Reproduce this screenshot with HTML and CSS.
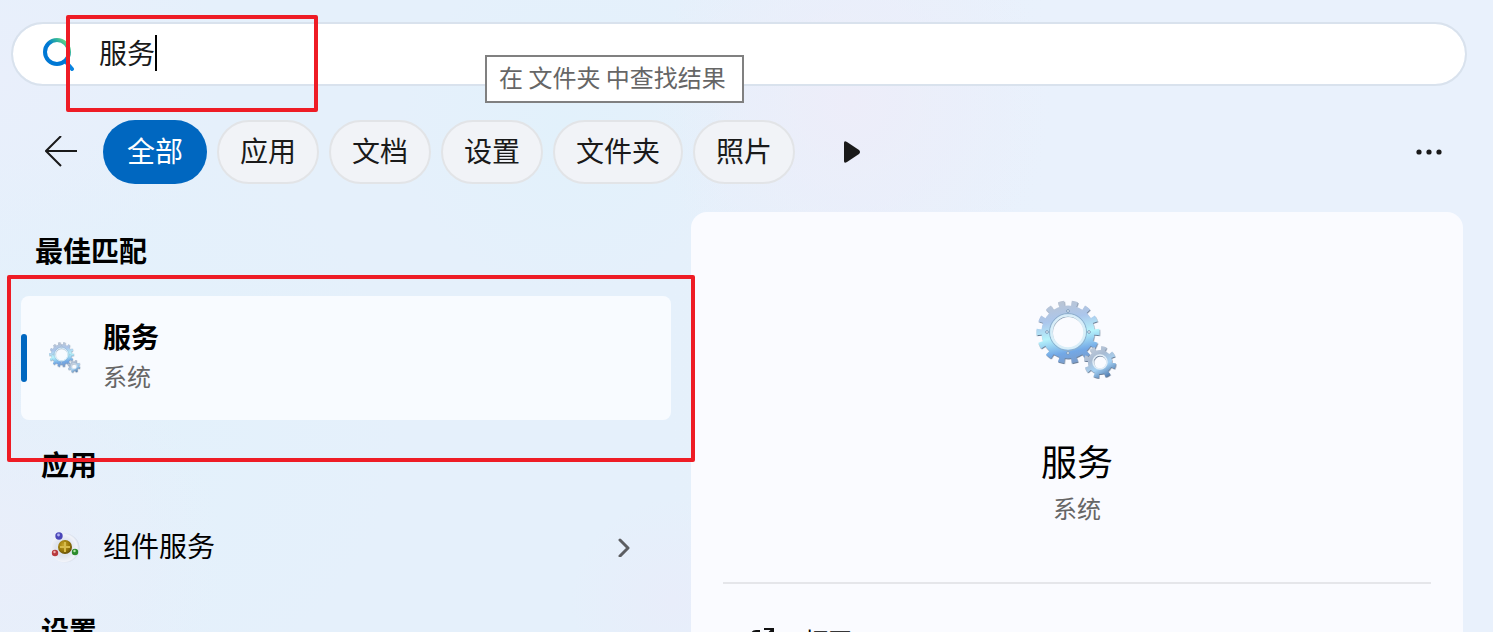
FILE: index.html
```
<!DOCTYPE html>
<html lang="zh-CN">
<head>
    <meta charset="UTF-8">
    <meta name="viewport" content="width=device-width, initial-scale=1.0">
    <title>搜索</title>
    <link rel="stylesheet" href="styles.css">
</head>
<body>
    <header>
        <div class="search-bar">
            <svg class="search-icon" width="34" height="34" viewBox="0 0 34 34" fill="none">
                <defs>
                    <linearGradient id="lens" x1="8" y1="26" x2="27" y2="6" gradientUnits="userSpaceOnUse">
                        <stop offset="0.5" stop-color="#0078d4"/>
                        <stop offset="0.75" stop-color="#24aaa5"/>
                        <stop offset="1" stop-color="#68d585"/>
                    </linearGradient>
                </defs>
                <path d="M25 25l6 7" stroke="#0a84e0" stroke-width="4" stroke-linecap="round"/>
                <circle cx="16" cy="15" r="12" stroke="url(#lens)" stroke-width="4"/>
            </svg>
            <input type="text" class="search-input" value="服务" aria-label="搜索">
            <span class="caret"></span>
            <span class="mark mark-search"></span>
            <div class="tooltip" role="tooltip">在 文件夹 中查找结果</div>
        </div>

        <nav class="filters">
            <button class="icon-btn back" aria-label="返回">
                <svg width="32" height="32" viewBox="0 0 32 32" fill="none" stroke="#1a1a1a" stroke-width="2">
                    <path d="M32 15H1M16 0L1 15l15 15"/>
                </svg>
            </button>
            <div class="chips">
                <button class="chip active">全部</button>
                <button class="chip">应用</button>
                <button class="chip">文档</button>
                <button class="chip">设置</button>
                <button class="chip">文件夹</button>
                <button class="chip">照片</button>
            </div>
            <button class="icon-btn next" aria-label="更多筛选">
                <svg width="18" height="24" viewBox="0 0 18 24">
                    <path d="M1 3v18q0 3 3 1l12-8q2-2 0-4L4 2Q1 0 1 3z" fill="#1a1a1a"/>
                </svg>
            </button>
            <button class="icon-btn more" aria-label="选项">
                <svg width="28" height="8" viewBox="0 0 28 8" fill="#1a1a1a">
                    <circle cx="4" cy="4" r="2.6"/>
                    <circle cx="14" cy="4" r="2.6"/>
                    <circle cx="24" cy="4" r="2.6"/>
                </svg>
            </button>
        </nav>
    </header>

    <main class="content">
        <section class="results">
            <h2 class="first">最佳匹配</h2>
            <div class="best">
                <a href="#" class="card">
                    <svg class="result-icon" width="32" height="32" viewBox="0 0 82 82"><use href="#gears"/></svg>
                    <span class="card-text">
                        <strong>服务</strong>
                        <small>系统</small>
                    </span>
                </a>
                <span class="mark mark-best"></span>
            </div>

            <h2>应用</h2>
            <a href="#" class="row">
                <svg class="result-icon" width="32" height="32" viewBox="0 0 32 32">
                    <defs>
                        <radialGradient id="disc" cx="0.45" cy="0.5" r="0.55">
                            <stop offset="0.5" stop-color="#dfe4ee"/>
                            <stop offset="0.85" stop-color="#f1f3f9"/>
                            <stop offset="1" stop-color="#cfd8e6"/>
                        </radialGradient>
                        <radialGradient id="gold" cx="0.4" cy="0.35" r="0.7">
                            <stop offset="0" stop-color="#c9a72a"/>
                            <stop offset="0.6" stop-color="#967508"/>
                            <stop offset="1" stop-color="#5f4a05"/>
                        </radialGradient>
                    </defs>
                    <circle cx="16" cy="17" r="14.5" fill="url(#disc)"/>
                    <circle cx="16" cy="16" r="7" fill="url(#gold)"/>
                    <path d="M16 11v10M11 16h10" stroke="#d8bc4c" stroke-width="2"/>
                    <circle cx="10" cy="5" r="3.7" fill="#4a46b8"/>
                    <circle cx="9.5" cy="4" r="1.4" fill="#b3b4f2"/>
                    <circle cx="6" cy="22" r="3.2" fill="#b83a3e"/>
                    <circle cx="5.5" cy="21" r="1.2" fill="#efb0ae"/>
                    <circle cx="26" cy="21" r="3.2" fill="#2c8b2c"/>
                    <circle cx="25.5" cy="20" r="1.2" fill="#b0e6a5"/>
                </svg>
                <span>组件服务</span>
                <svg class="chevron" width="14" height="20" viewBox="0 0 14 20" fill="none" stroke="#5c5e62" stroke-width="3" stroke-linecap="round" stroke-linejoin="round">
                    <path d="M3 3l8 8-8 8"/>
                </svg>
            </a>

            <h2>设置</h2>
        </section>

        <section class="preview">
            <svg class="preview-icon" width="82" height="82" viewBox="0 0 82 82">
                <defs>
                    <linearGradient id="steel" x1="0.3" y1="0" x2="0.5" y2="1">
                        <stop offset="0" stop-color="#bcc4d0"/>
                        <stop offset="0.3" stop-color="#abc6ec"/>
                        <stop offset="0.55" stop-color="#b6f3fb"/>
                        <stop offset="0.8" stop-color="#72a8e6"/>
                        <stop offset="1" stop-color="#7d9ac4"/>
                    </linearGradient>
                    <linearGradient id="steel-small" x1="0" y1="0" x2="0.6" y2="1">
                        <stop offset="0" stop-color="#d2d8e0"/>
                        <stop offset="0.45" stop-color="#a9bbd2"/>
                        <stop offset="0.7" stop-color="#a7d3f5"/>
                        <stop offset="1" stop-color="#4c78ad"/>
                    </linearGradient>
                    <mask id="big-gear" maskUnits="userSpaceOnUse" x="0" y="0" width="82" height="82">
                        <circle cx="32" cy="32" r="26.500" fill="#fff"/>
                        <circle cx="32" cy="32" r="28.500" fill="none" stroke="#fff" stroke-width="6" pathLength="280" stroke-dasharray="9 11" stroke-dashoffset="4.500"/>
                        <circle cx="32" cy="32" r="16" fill="#000"/>
                    </mask>
                    <mask id="small-gear" maskUnits="userSpaceOnUse" x="0" y="0" width="82" height="82">
                        <circle cx="64" cy="62" r="12" fill="#fff"/>
                        <circle cx="64" cy="62" r="13.500" fill="none" stroke="#fff" stroke-width="5" pathLength="160" stroke-dasharray="9 11" stroke-dashoffset="-2"/>
                        <circle cx="64" cy="62" r="6.500" fill="#000"/>
                    </mask>
                    <filter id="edge" x="-10%" y="-10%" width="120%" height="120%">
                        <feDropShadow dx="0.500" dy="1" stdDeviation="0.400" flood-color="#3d5878" flood-opacity="0.800"/>
                    </filter>
                </defs>
                <g id="gears">
                    <g filter="url(#edge)">
                        <rect width="66" height="66" fill="url(#steel)" mask="url(#big-gear)"/>
                    </g>
                    <circle cx="32" cy="32" r="18.500" fill="none" stroke="#8fb0cc" stroke-width="1"/>
                    <circle cx="32" cy="32" r="16.500" fill="none" stroke="#d9eef8" stroke-width="2.500"/>
                    <g fill="#e8f2fa" stroke="#6f8fb0" stroke-width="0.800">
                        <circle cx="32" cy="11" r="1.400"/>
                        <circle cx="32" cy="53" r="1.400"/>
                        <circle cx="11" cy="32" r="1.400"/>
                        <circle cx="53" cy="32" r="1.400"/>
                    </g>
                    <g filter="url(#edge)">
                        <rect x="46" y="44" width="36" height="36" fill="url(#steel-small)" mask="url(#small-gear)"/>
                    </g>
                    <circle cx="64" cy="62" r="7" fill="none" stroke="#e2edf6" stroke-width="1.500"/>
                </g>
            </svg>
            <h1>服务</h1>
            <p>系统</p>
            <hr>
            <a href="#" class="action">
                <svg width="24" height="24" viewBox="0 0 24 24" fill="none" stroke="#111" stroke-width="2">
                    <path d="M10 3H6Q2 3 2 7v11q0 4 4 4h11q4 0 4-4v-4M14 1h9v9M23 1L11 13"/>
                </svg>
                <span>打开</span>
            </a>
        </section>
    </main>
</body>
</html>
```
FILE: styles.css
```
* {
    margin: 0;
    padding: 0;
    box-sizing: border-box;
}

body {
    height: 100vh;
    overflow: hidden;
    padding-top: 22px;
    font-family: "Noto Sans CJK SC", sans-serif;
    font-size: 28px;
    line-height: 40px;
    color: #000;
    background:
        radial-gradient(circle at 38% 20%, #e2f1fb 0, transparent 16%),
        radial-gradient(circle at 57% 16%, #ededf9 0, transparent 20%),
        radial-gradient(circle at 0 88%, #e9eefa 0, transparent 14%),
        radial-gradient(circle at 45% 95%, #e8edfa 0, transparent 10%),
        radial-gradient(circle at 8% 66%, #e3f1fb 0, transparent 20%),
        radial-gradient(circle at 0 12%, #e9effb 0, transparent 14%),
        linear-gradient(90deg, #e5f0fb 0, #e5f0fb 45%, #e9f1fc 70%);
}

button {
    font: inherit;
    border: none;
    background: none;
    cursor: pointer;
}

a {
    color: inherit;
    text-decoration: none;
}

svg {
    display: block;
    flex-shrink: 0;
}

/* search */
.search-bar {
    position: relative;
    display: flex;
    align-items: center;
    height: 64px;
    margin: 0 26px 0 11px;
    padding: 0 28px;
    background: #fff;
    background-clip: padding-box;
    border: 2px solid #d9e2ed;
    border-radius: 32px;
}

.search-input {
    flex: 1;
    min-width: 0;
    height: 56px;
    margin-left: 24px;
    padding-bottom: 4px;
    border: none;
    outline: none;
    background: transparent;
    font: inherit;
    color: #1a1a1a;
}

.caret {
    position: absolute;
    left: 142px;
    top: 11px;
    width: 2px;
    height: 36px;
    background: #000;
}

.tooltip {
    position: absolute;
    left: 472px;
    top: 31px;
    padding: 4px 16px 8px 12px;
    border: 2px solid #808080;
    background: #fff;
    color: #666;
    font-size: 24px;
    line-height: 32px;
    white-space: nowrap;
}

/* red highlight boxes */
.mark {
    position: absolute;
    border: 4px solid #ee1c25;
    border-radius: 2px;
    pointer-events: none;
}

.mark-search {
    left: 53px;
    top: -9px;
    width: 252px;
    height: 97px;
}

.mark-best {
    top: -21px;
    right: -24px;
    bottom: -42px;
    left: -14px;
}

/* filters */
.filters {
    display: flex;
    align-items: center;
    margin-top: 34px;
    padding: 0 50px 0 45px;
}

.chips {
    display: flex;
    gap: 10px;
    margin-left: 26px;
}

.chip {
    height: 64px;
    padding: 0 21px 4px;
    border: 2px solid #e2e4e7;
    border-radius: 32px;
    background: #f1f3f7;
    color: #1a1a1a;
    white-space: nowrap;
}

.chip.active {
    padding: 0 24px 4px;
    border: none;
    background: #0067c0;
    color: #fff;
}

.next {
    margin-left: 48px;
}

.more {
    margin-left: auto;
}

/* results */
.content {
    display: grid;
    grid-template-columns: 325fr 386fr;
    gap: 20px;
    margin-top: 28px;
    padding: 0 30px 0 21px;
}

.results {
    padding-top: 18px;
}

h2 {
    margin: 24px 0 24px 20px;
    font-size: 28px;
    font-weight: 700;
}

h2.first {
    margin: 0 0 26px 14px;
}

.best {
    position: relative;
}

.card {
    position: relative;
    display: flex;
    align-items: center;
    height: 124px;
    padding-left: 28px;
    border-radius: 8px;
    background: #f8fbff;
}

.card::before {
    content: "";
    position: absolute;
    left: 0;
    top: 38px;
    width: 6px;
    height: 48px;
    border-radius: 3px;
    background: #0067c0;
}

.card-text {
    display: flex;
    flex-direction: column;
    gap: 2px;
    margin-left: 22px;
    padding-bottom: 6px;
}

.card-text strong {
    font-weight: 700;
}

.card-text small {
    font-size: 24px;
    line-height: 36px;
    color: #666;
}

.row {
    display: flex;
    align-items: center;
    height: 78px;
    padding: 0 40px 0 28px;
}

.row span {
    margin-left: 22px;
    padding-bottom: 4px;
}

.chevron {
    margin-left: auto;
}

/* preview */
.preview {
    min-height: 480px;
    padding: 88px 32px 0;
    border-radius: 16px 16px 0 0;
    background: #fafbff;
    text-align: center;
}

.preview-icon {
    margin: 0 auto;
}

.preview h1 {
    margin-top: 54px;
    font-size: 36px;
    font-weight: 400;
    line-height: 48px;
}

.preview p {
    margin-top: 8px;
    font-size: 24px;
    line-height: 32px;
    color: #666;
}

.preview hr {
    margin-top: 58px;
    border: none;
    border-top: 2px solid #e5e6ea;
}

.action {
    display: flex;
    align-items: center;
    gap: 30px;
    margin-top: 40px;
    padding-left: 27px;
    font-size: 24px;
    line-height: 32px;
}
```
